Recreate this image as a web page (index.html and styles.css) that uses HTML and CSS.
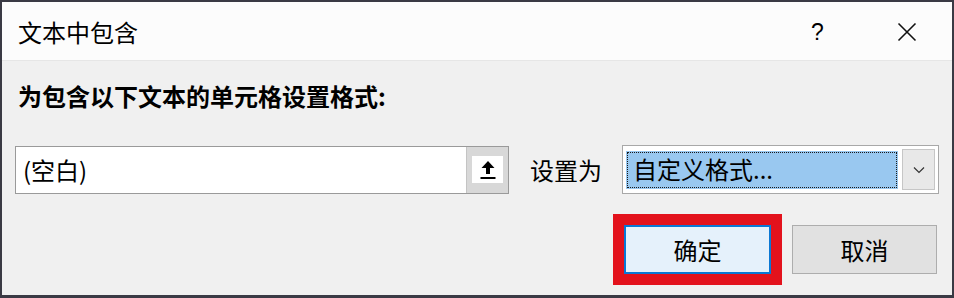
FILE: index.html
```html
<!DOCTYPE html>
<html lang="zh-CN">
<head>
<meta charset="utf-8">
<title>文本中包含</title>
<link rel="stylesheet" href="styles.css">
</head>
<body>
<div class="window">
  <div class="titlebar">
    <span class="title">文本中包含</span>
    <span class="help">?</span>
    <span class="close">
      <svg width="20" height="20" viewBox="0 0 20 20"><path d="M1.5 1.5 L18.5 18.5 M18.5 1.5 L1.5 18.5" stroke="#111" stroke-width="1.6" fill="none"/></svg>
    </span>
  </div>
  <div class="content">
    <div class="label">为包含以下文本的单元格设置格式:</div>
    <div class="row">
      <div class="input">
        <span class="input-text">(空白)</span>
        <span class="pick">
          <span class="pick-inner">
            <svg width="16" height="20" viewBox="0 0 16 20"><path d="M8 1 L14.5 8 L10 8 L10 14 L6 14 L6 8 L1.5 8 Z" fill="#000"/><rect x="0.5" y="17" width="15" height="2" fill="#000"/></svg>
          </span>
        </span>
      </div>
      <span class="setas">设置为</span>
      <div class="select">
        <div class="select-value"><span>自定义格式...</span></div>
        <div class="select-btn">
          <svg width="12" height="8" viewBox="0 0 12 8"><path d="M1 1.5 L6 6.5 L11 1.5" stroke="#333" stroke-width="1.2" fill="none"/></svg>
        </div>
      </div>
    </div>
    <div class="buttons">
      <div class="mark">
        <div class="btn btn-ok">确定</div>
      </div>
      <div class="btn btn-cancel">取消</div>
    </div>
  </div>
</div>
</body>
</html>
```

FILE: styles.css
```css
html, body {
  margin: 0;
  padding: 0;
}
body {
  width: 954px;
  height: 298px;
  background: #2e2e36;
  font-family: "Noto Sans CJK SC", "Noto Sans", sans-serif;
  color: #000;
}
.window {
  box-sizing: border-box;
  width: 954px;
  height: 298px;
  border-top: 2px solid #3a3a44;
  border-left: 2px solid #3a3a44;
  border-right: 2px solid #3a3a44;
  border-bottom: 3px solid #3a3a44;
  background: #f0f0f0;
  display: flex;
  flex-direction: column;
}
.titlebar {
  height: 59px;
  background: #fcfcfc;
  display: flex;
  align-items: center;
  padding-left: 16px;
  box-sizing: border-box;
  border-bottom: 1px solid #e6e6e6;
}
.title {
  font-size: 24px;
  line-height: 30px;
  flex: 1;
  margin-top: 2px;
}
.help {
  font-family: "Liberation Sans", sans-serif;
  font-size: 23px;
  line-height: 30px;
  width: 12px;
  margin-right: 74px;
  margin-top: 2px;
}
.close {
  display: flex;
  width: 20px;
  height: 20px;
  margin-right: 35px;
  margin-top: 2px;
}
.content {
  flex: 1;
  padding: 19px 13px 0 13px;
  display: flex;
  flex-direction: column;
}
.label {
  font-size: 24px;
  font-weight: bold;
  line-height: 32px;
  margin-left: 3px;
}
.row {
  display: flex;
  align-items: center;
  margin-top: 33px;
  height: 49px;
}
.input {
  box-sizing: border-box;
  width: 494px;
  height: 48px;
  border: 1px solid #9a9a9a;
  background: #fff;
  display: flex;
  align-items: stretch;
}
.input-text {
  flex: 1;
  font-size: 24px;
  line-height: 46px;
  padding-left: 7px;
}
.pick {
  width: 41px;
  background: #d8d8d8;
  border-left: 1px solid #c4c4c4;
  display: flex;
  align-items: center;
  justify-content: center;
}
.pick-inner {
  width: 31px;
  height: 27px;
  background: #fff;
  display: flex;
  align-items: center;
  justify-content: center;
}
.setas {
  font-size: 24px;
  line-height: 30px;
  margin-left: 21px;
  width: 92px;
}
.select {
  box-sizing: border-box;
  width: 317px;
  height: 49px;
  border: 1px solid #a8a8a8;
  background: #fff;
  display: flex;
  align-items: center;
  padding: 3px;
}
.select-value {
  box-sizing: border-box;
  width: 273px;
  height: 38px;
  background: #99c8f0;
  padding: 1px;
}
.select-value span {
  box-sizing: border-box;
  display: block;
  height: 100%;
  border: 1px dotted #1a1a1a;
  font-size: 24px;
  line-height: 32px;
  padding-left: 5px;
}
.select-btn {
  box-sizing: border-box;
  width: 33px;
  height: 41px;
  margin-left: 4px;
  background: #e8e8e8;
  border: 1px solid #c6c6c6;
  display: flex;
  align-items: center;
  justify-content: center;
}
.buttons {
  display: flex;
  justify-content: flex-end;
  align-items: center;
  margin-top: 20px;
  padding-right: 2px;
  gap: 10px;
}
.mark {
  border: 11px solid #e3121c;
  display: flex;
}
.btn {
  box-sizing: border-box;
  height: 49px;
  display: flex;
  align-items: center;
  justify-content: center;
  font-size: 24px;
}
.btn-ok {
  width: 147px;
  border: 2px solid #0a78d4;
  background: #e5f1fb;
}
.btn-cancel {
  width: 145px;
  border: 1px solid #adadad;
  background: #e1e1e1;
}
```
